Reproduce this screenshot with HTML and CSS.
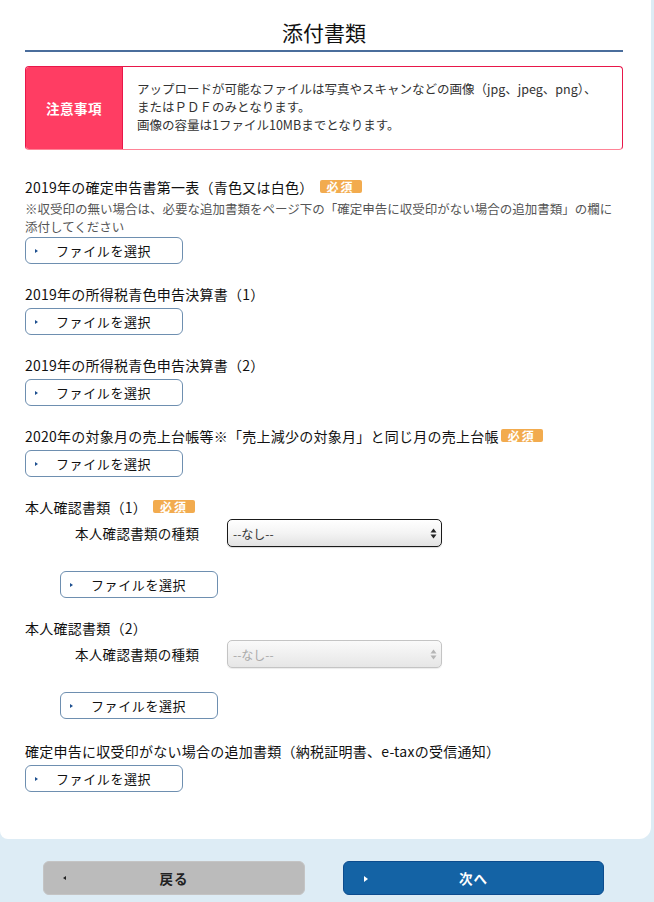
FILE: index.html
```html
<!DOCTYPE html>
<html lang="ja">
<head>
<meta charset="utf-8">
<link rel="stylesheet" href="styles.css">
</head>
<body>
<div class="card">
  <h1 class="title">添付書類</h1>
  <div class="notice">
    <div class="notice-label">注意事項</div>
    <div class="notice-text">アップロードが可能なファイルは写真やスキャンなどの画像（jpg、jpeg、png）、<br>またはＰＤＦのみとなります。<br>画像の容量は1ファイル10MBまでとなります。</div>
  </div>

  <div class="section first">
    <div class="heading">2019年の確定申告書第一表（青色又は白色）<span class="badge">必須</span></div>
    <div class="note">※収受印の無い場合は、必要な追加書類をページ下の「確定申告に収受印がない場合の追加書類」の欄に<br>添付してください</div>
    <button class="file-btn tight"><span class="tri"></span>ファイルを選択</button>
  </div>

  <div class="section">
    <div class="heading">2019年の所得税青色申告決算書（1）</div>
    <button class="file-btn"><span class="tri"></span>ファイルを選択</button>
  </div>

  <div class="section">
    <div class="heading">2019年の所得税青色申告決算書（2）</div>
    <button class="file-btn"><span class="tri"></span>ファイルを選択</button>
  </div>

  <div class="section">
    <div class="heading">2020年の対象月の売上台帳等※「売上減少の対象月」と同じ月の売上台帳<span class="badge near">必須</span></div>
    <button class="file-btn"><span class="tri"></span>ファイルを選択</button>
  </div>

  <div class="section">
    <div class="heading">本人確認書類（1）<span class="badge">必須</span></div>
    <div class="select-row">
      <span class="select-label">本人確認書類の種類</span>
      <div class="select">
        <span class="select-value">--なし--</span>
        <svg class="arrows" width="7" height="11" viewBox="0 0 7 11"><path d="M3.5 0.5 L6.5 4.5 H0.5 Z M3.5 10.5 L6.5 6.5 H0.5 Z" fill="currentColor"/></svg>
      </div>
    </div>
    <button class="file-btn indent"><span class="tri"></span>ファイルを選択</button>
  </div>

  <div class="section">
    <div class="heading">本人確認書類（2）</div>
    <div class="select-row">
      <span class="select-label">本人確認書類の種類</span>
      <div class="select disabled">
        <span class="select-value">--なし--</span>
        <svg class="arrows" width="7" height="11" viewBox="0 0 7 11"><path d="M3.5 0.5 L6.5 4.5 H0.5 Z M3.5 10.5 L6.5 6.5 H0.5 Z" fill="currentColor"/></svg>
      </div>
    </div>
    <button class="file-btn indent"><span class="tri"></span>ファイルを選択</button>
  </div>

  <div class="section last">
    <div class="heading">確定申告に収受印がない場合の追加書類（納税証明書、e-taxの受信通知）</div>
    <button class="file-btn"><span class="tri"></span>ファイルを選択</button>
  </div>
</div>

<div class="footer">
  <button class="nav-btn back"><span class="tri-left"></span>戻る</button>
  <button class="nav-btn next"><span class="tri-right"></span>次へ</button>
</div>
</body>
</html>
```

FILE: styles.css
```css
html, body {
  margin: 0;
  padding: 0;
}
body {
  background: #ddecf5;
  font-family: "Noto Sans CJK JP", "Noto Sans", sans-serif;
  color: #111;
  width: 654px;
  height: 902px;
  overflow: hidden;
}
.card {
  width: 651px;
  box-sizing: border-box;
  background: #fff;
  padding: 18px 28px 47px 25px;
  border-radius: 0 0 12px 8px;
}
.title {
  margin: 0;
  font-size: 21px;
  font-weight: normal;
  line-height: 28px;
  text-align: center;
  padding-bottom: 4px;
  border-bottom: 2px solid #4a6d9c;
  color: #111;
}
.notice {
  margin-top: 14px;
  display: flex;
  border: 1px solid #e8174a;
  border-bottom-color: #ff8497;
  border-radius: 4px;
  overflow: hidden;
}
.notice-label {
  width: 96px;
  flex: none;
  background: #ff3d63;
  border-right: 1px solid #e8174a;
  color: #fff;
  font-size: 13.5px;
  font-weight: bold;
  display: flex;
  align-items: center;
  justify-content: center;
  letter-spacing: 0.5px;
}
.notice-text {
  padding: 13px 10px 15px 14px;
  font-size: 12.5px;
  line-height: 18px;
  color: #333;
}
.section {
  margin-top: 19px;
}
.section.first {
  margin-top: 26px;
}
.section.last {
  margin-top: 21px;
}
.heading {
  font-size: 14px;
  line-height: 22px;
  letter-spacing: 0.25px;
  color: #111;
  display: flex;
  align-items: center;
}
.badge {
  display: inline-block;
  margin-left: 6px;
  background: #f2ab4e;
  color: #fff;
  font-size: 12px;
  font-weight: bold;
  line-height: 13px;
  height: 13px;
  width: 42px;
  text-align: center;
  letter-spacing: 2px;
  border-radius: 2px;
  margin-top: -1px;
}
.badge.near {
  margin-left: 2px;
}
.note {
  margin-top: 2px;
  font-size: 12.5px;
  line-height: 18px;
  color: #555;
}
.file-btn {
  display: flex;
  align-items: center;
  margin-top: 3px;
  width: 158px;
  height: 27px;
  box-sizing: border-box;
  background: #fff;
  border: 1px solid #6e8fb0;
  border-radius: 6px;
  padding: 0 0 0 9px;
  font-family: "Noto Sans CJK JP", "Noto Sans", sans-serif;
  font-size: 13px;
  letter-spacing: 0.6px;
  color: #111;
}
.file-btn.tight {
  margin-top: 1px;
}
.file-btn.indent {
  margin-left: 35px;
  margin-top: 24px;
}
.tri {
  width: 0;
  height: 0;
  border-left: 3px solid #1d4f8f;
  border-top: 2.5px solid transparent;
  border-bottom: 2.5px solid transparent;
  margin-right: 18px;
}
.select-row {
  display: flex;
  align-items: center;
  margin-top: 1px;
  padding-left: 50px;
}
.select-label {
  width: 152px;
  font-size: 13.5px;
  color: #111;
  letter-spacing: 0.3px;
}
.select {
  position: relative;
  width: 215px;
  height: 28px;
  box-sizing: border-box;
  border: 1px solid #1a1a1a;
  border-radius: 5px;
  background: linear-gradient(#ffffff, #f4f4f4 50%, #e2e2e2);
  display: flex;
  align-items: center;
  padding-left: 5px;
  color: #222;
  box-shadow: 0 1px 1px rgba(0,0,0,0.15);
}
.select-value {
  font-size: 12px;
  color: #333;
}
.select .arrows {
  position: absolute;
  right: 4px;
  top: 8px;
  color: #222;
}
.select.disabled {
  border-color: #c4c4c4;
  background: linear-gradient(#fafafa, #f0f0f0 50%, #e6e6e6);
  box-shadow: 0 1px 1px rgba(0,0,0,0.08);
}
.select.disabled .select-value {
  color: #aaa;
}
.select.disabled .arrows {
  color: #b5b5b5;
}
.footer {
  display: flex;
  gap: 38px;
  padding: 22px 0 0 43px;
}
.nav-btn {
  position: relative;
  width: 262px;
  height: 34px;
  box-sizing: border-box;
  border-radius: 6px;
  font-family: "Noto Sans CJK JP", "Noto Sans", sans-serif;
  font-size: 13.5px;
  font-weight: bold;
  letter-spacing: 1px;
  display: flex;
  align-items: center;
  justify-content: center;
  padding: 0;
}
.nav-btn.back {
  background: #bbbbbb;
  border: 1px solid #c4c4c4;
  color: #222;
}
.nav-btn.next {
  width: 261px;
  background: #1463a5;
  border: 1px solid #0c4c8e;
  color: #fff;
}
.tri-left {
  position: absolute;
  left: 19px;
  top: 14px;
  width: 0;
  height: 0;
  border-right: 3px solid #222;
  border-top: 2.5px solid transparent;
  border-bottom: 2.5px solid transparent;
}
.tri-right {
  position: absolute;
  left: 20px;
  top: 14px;
  width: 0;
  height: 0;
  border-left: 4px solid #fff;
  border-top: 3px solid transparent;
  border-bottom: 3px solid transparent;
}
```
